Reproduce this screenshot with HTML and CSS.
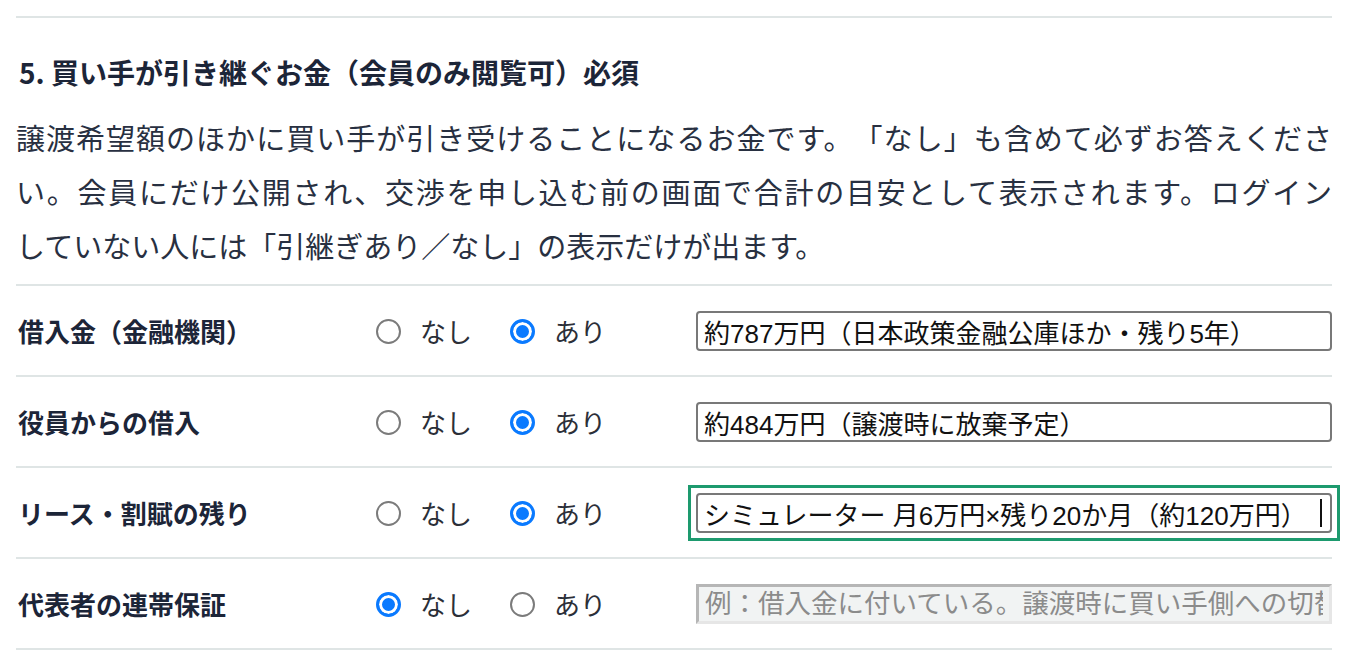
FILE: index.html
```html
<!DOCTYPE html>
<html lang="ja">
<head>
<meta charset="utf-8">
<title>買い手が引き継ぐお金</title>
<link rel="stylesheet" href="styles.css">
</head>
<body>
<div class="page">
  <section class="q">
    <h2 class="q-title">5. 買い手が引き継ぐお金（会員のみ閲覧可）必須</h2>
    <p class="q-desc">譲渡希望額のほかに買い手が引き受けることになるお金です。「なし」も含めて必ずお答えください。会員にだけ公開され、交渉を申し込む前の画面で合計の目安として表示されます。ログイン<span class="nw">していない人には</span>「引継ぎあり／なし」の表示だけが出ます。</p>
    <div class="rows">
      <div class="row">
        <div class="row-label">借入金（金融機関）</div>
        <div class="choices">
          <label class="choice"><input class="radio" type="radio" name="loan"><span>なし</span></label>
          <label class="choice"><input class="radio" type="radio" name="loan" checked><span>あり</span></label>
        </div>
        <div class="field"><input class="text" type="text" value="約787万円（日本政策金融公庫ほか・残り5年）"></div>
      </div>
      <div class="row">
        <div class="row-label">役員からの借入</div>
        <div class="choices">
          <label class="choice"><input class="radio" type="radio" name="officer"><span>なし</span></label>
          <label class="choice"><input class="radio" type="radio" name="officer" checked><span>あり</span></label>
        </div>
        <div class="field"><input class="text" type="text" value="約484万円（譲渡時に放棄予定）"></div>
      </div>
      <div class="row">
        <div class="row-label">リース・割賦の残り</div>
        <div class="choices">
          <label class="choice"><input class="radio" type="radio" name="lease"><span>なし</span></label>
          <label class="choice"><input class="radio" type="radio" name="lease" checked><span>あり</span></label>
        </div>
        <div class="field is-focused"><input class="text" type="text" value="シミュレーター 月6万円×残り20か月（約120万円）"><span class="caret"></span></div>
      </div>
      <div class="row">
        <div class="row-label">代表者の連帯保証</div>
        <div class="choices">
          <label class="choice"><input class="radio" type="radio" name="guarantee" checked><span>なし</span></label>
          <label class="choice"><input class="radio" type="radio" name="guarantee"><span>あり</span></label>
        </div>
        <div class="field"><input class="text" type="text" disabled placeholder="例：借入金に付いている。譲渡時に買い手側への切替が必要"></div>
      </div>
    </div>
  </section>
</div>
</body>
</html>
```

FILE: styles.css
```css
* {
  box-sizing: border-box;
}

body {
  margin: 0;
  background: #ffffff;
  font-family: "Noto Sans CJK JP", "Noto Sans", sans-serif;
  color: #283040;
}

.page {
  padding: 16px 16px 0;
}

.q {
  border-top: 2px solid #dfe5e5;
}

.q-title {
  margin: 34px 0 0;
  padding-left: 3px;
  font-size: 28px;
  line-height: 40px;
  font-weight: 700;
  color: #1c2538;
}

.q-desc {
  margin: 18px 0 0;
  font-size: 29px;
  line-height: 54px;
  text-align: justify;
  text-spacing-trim: space-all;
  color: #283041;
}

.nw {
  white-space: nowrap;
}

.rows {
  margin-top: 12px;
  border-bottom: 2px solid #dfe5e5;
}

.row {
  display: grid;
  grid-template-columns: 360px 320px 1fr;
  align-items: center;
  border-top: 2px solid #dfe5e5;
  padding: 25px 0 24px;
}

.row-label {
  padding-left: 2px;
  font-size: 26px;
  line-height: 40px;
  font-weight: 700;
  color: #1c2538;
}

.choices {
  display: flex;
  align-items: center;
  gap: 38px;
}

.choice {
  display: flex;
  align-items: center;
  gap: 19px;
  font-size: 26px;
  line-height: 40px;
  color: #2b2f38;
}

.radio {
  appearance: none;
  -webkit-appearance: none;
  margin: 0;
  width: 25px;
  height: 25px;
  border: 2px solid #7b7b7b;
  border-radius: 50%;
  background: #ffffff;
}

.radio:checked {
  border: 3px solid #0a7aff;
  background: #0a7aff;
  box-shadow: inset 0 0 0 3px #ffffff;
}

.field {
  position: relative;
}

.field.is-focused {
  outline: 3px solid #1d9a6e;
  outline-offset: 5px;
}

.text {
  display: block;
  width: 100%;
  height: 40px;
  margin: 0;
  padding: 0 6px;
  border: 2px solid #787878;
  border-radius: 4px;
  background: #ffffff;
  font-family: "Liberation Sans", "Noto Sans CJK JP", sans-serif;
  font-size: 26px;
  color: #111111;
}

.text:focus {
  outline: none;
}

.caret {
  position: absolute;
  right: 10px;
  top: 6px;
  width: 2px;
  height: 28px;
  background: #111111;
}

.text:disabled {
  background: #f1f3f3;
  border-width: 3px;
  border-style: solid;
  border-color: #b6b6b6 #e6e6e6 #e6e6e6 #b6b6b6;
  border-radius: 0;
  font-size: 26.5px;
}

.text::placeholder {
  color: #8b8b8b;
  opacity: 1;
}
```
